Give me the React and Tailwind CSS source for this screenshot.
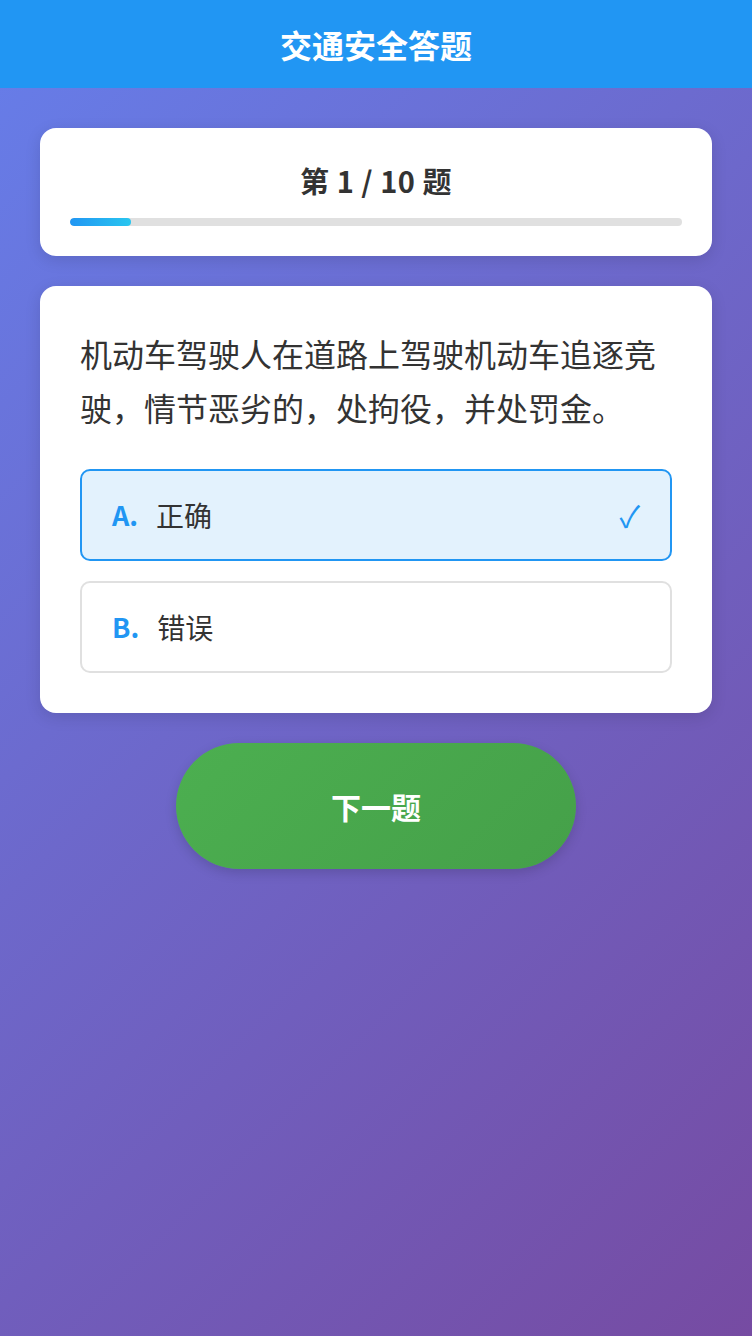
import { useState } from "react";

const question = {
  text: "机动车驾驶人在道路上驾驶机动车追逐竞驶，情节恶劣的，处拘役，并处罚金。",
  options: [
    { key: "A", label: "正确" },
    { key: "B", label: "错误" },
  ],
};

function OptionRow({ option, selected, onSelect }) {
  return (
    <button
      type="button"
      onClick={onSelect}
      className={`flex h-[92px] w-full items-center rounded-[10px] border-2 px-[30px] text-left ${
        selected ? "border-[#2196F3] bg-[#E3F2FD]" : "border-[#e0e0e0] bg-white"
      }`}
    >
      <span className="mr-[18px] text-[27px] font-bold text-[#2196F3]">{option.key}.</span>
      <span className="flex-1 text-[28px] text-[#333]">{option.label}</span>
      {selected && <span className="text-[30px] leading-none text-[#2196F3]">✓</span>}
    </button>
  );
}

export default function App() {
  const [picked, setPicked] = useState("A");
  const current = 1;
  const total = 10;

  return (
    <div
      className="min-h-screen bg-[linear-gradient(135deg,#667eea_0%,#764ba2_100%)]"
      style={{ fontFamily: '"Noto Sans CJK SC", "Noto Sans", sans-serif' }}
    >
      <header className="flex h-[88px] items-center justify-center bg-[#2196F3]">
        <h1 className="text-[32px] font-bold text-white">交通安全答题</h1>
      </header>

      <main className="flex flex-col gap-[30px] px-10 pt-10">
        {/* progress */}
        <section className="rounded-2xl bg-white px-[30px] pb-[30px] pt-[30px] shadow-[0_4px_16px_rgba(0,0,0,0.12)]">
          <div className="mb-[16px] text-center text-[29px] font-bold leading-[44px] tracking-[0.5px] text-[#333]">
            第 {current} / {total} 题
          </div>
          <div className="h-2 overflow-hidden rounded-full bg-[#e0e0e0]">
            <div
              className="h-full rounded-full bg-[linear-gradient(90deg,#2196F3,#29C6EF)]"
              style={{ width: `${(current / total) * 100}%` }}
            />
          </div>
        </section>

        {/* question */}
        <section className="rounded-2xl bg-white p-10 shadow-[0_4px_16px_rgba(0,0,0,0.12)]">
          <p className="mb-[35px] text-[32px] leading-[54px] text-[#333]">{question.text}</p>
          <div className="flex flex-col gap-5">
            {question.options.map((o) => (
              <OptionRow
                key={o.key}
                option={o}
                selected={picked === o.key}
                onSelect={() => setPicked(o.key)}
              />
            ))}
          </div>
        </section>

        <div className="flex justify-center">
          <button
            type="button"
            className="h-[126px] w-[400px] rounded-full bg-[linear-gradient(135deg,#4CAF50,#45A049)] text-[30px] font-bold text-white shadow-[0_4px_12px_rgba(0,0,0,0.15)]"
          >
            下一题
          </button>
        </div>
      </main>
    </div>
  );
}
